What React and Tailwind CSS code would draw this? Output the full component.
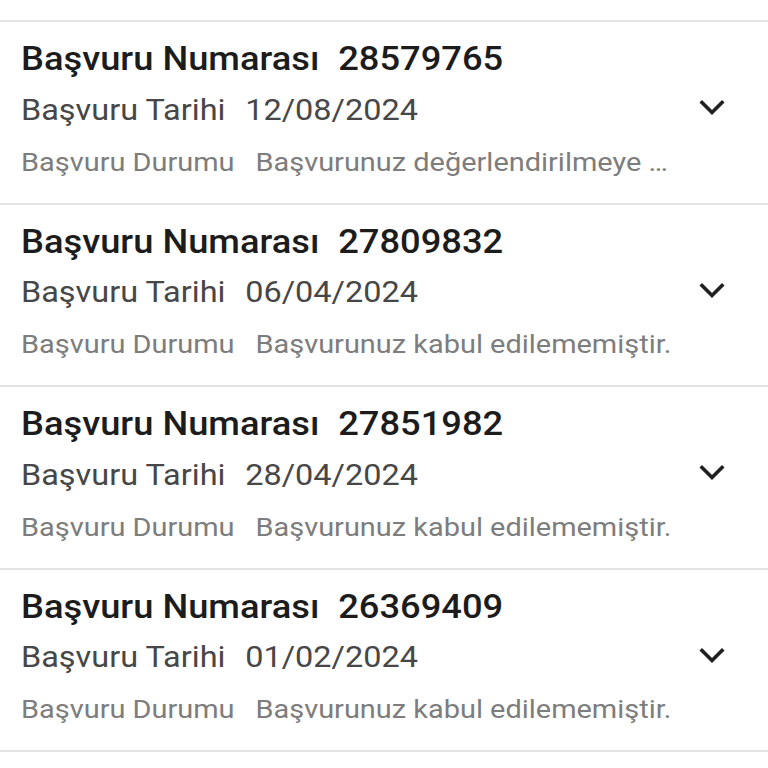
import React from 'react'

const items = [
  { no: '28579765', date: '12/08/2024', status: 'Başvurunuz değerlendirilmeye …' },
  { no: '27809832', date: '06/04/2024', status: 'Başvurunuz kabul edilememiştir.' },
  { no: '27851982', date: '28/04/2024', status: 'Başvurunuz kabul edilememiştir.' },
  { no: '26369409', date: '01/02/2024', status: 'Başvurunuz kabul edilememiştir.' },
]

const Chevron = () => (
  <svg width="30" height="20" viewBox="0 0 30 20" fill="none" stroke="#202020" strokeWidth="3.6" strokeLinecap="square">
    <path d="M5 4.5L15 14.5L25 4.5" />
  </svg>
)

export default function App() {
  return (
    <div className="w-[768px] h-[768px] bg-white overflow-hidden" style={{ fontFamily: 'Roboto, sans-serif' }}>
      <div className="h-[22px] border-b-2 border-[#e4e4e4]" />
      {items.map((it) => (
        <div key={it.no} className="h-[182.5px] border-b-2 border-[#e4e4e4] flex items-start pl-[20.5px] pr-[41px]">
          {/* text block is stretched a bit wider, like the source screenshot */}
          <div className="flex-1 min-w-0 pt-[17px] origin-left scale-x-[1.1]">
            <div className="text-[33px] leading-[40px] font-medium text-[#1c1c1c] whitespace-nowrap">
              Başvuru Numarası<span className="ml-[17px]">{it.no}</span>
            </div>
            <div className="text-[29.5px] leading-[40px] mt-[10.5px] text-[#474747] whitespace-nowrap">
              Başvuru Tarihi<span className="ml-[18px]">{it.date}</span>
            </div>
            <div className="text-[26.3px] leading-[34px] mt-[15px] text-[#7d7d7d] whitespace-nowrap">
              Başvuru Durumu<span className="ml-[19px]">{it.status}</span>
            </div>
          </div>
          <div className="mt-[76px]">
            <Chevron />
          </div>
        </div>
      ))}
    </div>
  )
}
